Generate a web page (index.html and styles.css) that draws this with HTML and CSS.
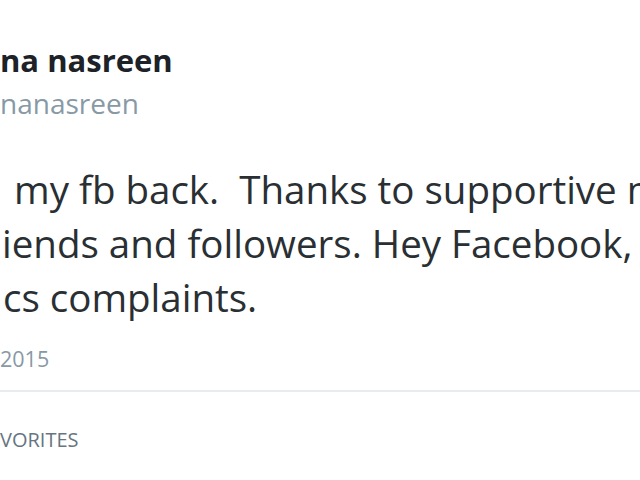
FILE: index.html
```html
<!DOCTYPE html>
<html>
<head>
<meta charset="utf-8">
<link rel="stylesheet" href="styles.css">
</head>
<body>
<div class="tweet">
  <div class="header">
    <div class="name">na nasreen</div>
    <div class="handle">nanasreen</div>
  </div>
  <div class="text">
    <div class="line first">my fb back.&nbsp; Thanks to supportive m</div>
    <div class="line second">iends and followers. Hey Facebook,</div>
    <div class="line third">cs complaints.</div>
  </div>
  <div class="date">2015</div>
  <div class="stats"><span class="stat">VORITES</span></div>
</div>
</body>
</html>
```
FILE: styles.css
```css
html, body {
  margin: 0;
  padding: 0;
  background: #fff;
  overflow: hidden;
}
body {
  width: 640px;
  height: 480px;
  font-family: "Open Sans", "Noto Sans", sans-serif;
  color: #292f33;
}
.tweet {
  white-space: nowrap;
  padding-top: 40px;
}
.header {
  display: flex;
  flex-direction: column;
}
.name {
  font-weight: 700;
  font-size: 31px;
  line-height: 40px;
  color: #1c2227;
}
.handle {
  margin-top: 3px;
  font-size: 28px;
  line-height: 40px;
  color: #8899a6;
}
.text {
  margin-top: 39px;
  font-size: 38.5px;
  line-height: 54px;
  color: #292f33;
}
.first {
  padding-left: 14px;
}
.second {
  padding-left: 2px;
}
.third {
  padding-left: 3px;
}
.date {
  margin-top: 20px;
  font-size: 21.5px;
  line-height: 30px;
  color: #8899a6;
  padding-bottom: 16px;
  border-bottom: 2px solid #e6ecf0;
}
.stats {
  padding-top: 33px;
  font-size: 20px;
  line-height: 30px;
  color: #66757f;
}
```
